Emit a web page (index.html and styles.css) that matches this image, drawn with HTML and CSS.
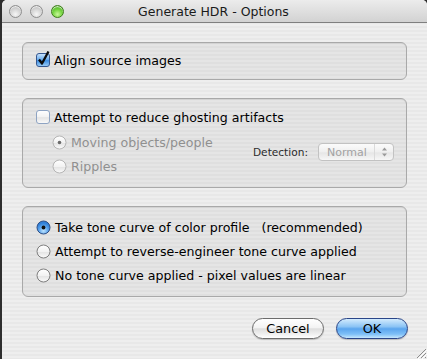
FILE: index.html
```html
<html>
<head>
    <title>Generate HDR - Options</title>
    <meta name="viewport" content="width=device-width, initial-scale=1" />
    <link rel="stylesheet" href="styles.css">
</head>
<body>
<div class="window">
    <div class="titlebar">
        <div class="lights">
            <span class="light"></span>
            <span class="light"></span>
            <span class="light green"></span>
        </div>
        <div class="title">Generate HDR - Options</div>
    </div>

    <div class="content">
        <div class="group group-align">
            <div class="option">
                <svg class="check" width="16" height="16" viewBox="0 0 16 16">
                    <defs>
                        <linearGradient id="blueCheck" x1="0" y1="0" x2="0" y2="1">
                            <stop offset="0" stop-color="#cfe6fb"/>
                            <stop offset="0.45" stop-color="#6fb0ef"/>
                            <stop offset="0.55" stop-color="#3d8ee3"/>
                            <stop offset="1" stop-color="#9fd0f8"/>
                        </linearGradient>
                    </defs>
                    <rect x="1.5" y="2.5" width="13" height="13" rx="2.5" fill="url(#blueCheck)" stroke="#36578f"/>
                    <path d="M4 8.5 L7 12.5 L13.5 0.5" fill="none" stroke="#0b0b0b" stroke-width="2.3" stroke-linejoin="round"/>
                </svg>
                <span>Align source images</span>
            </div>
        </div>

        <div class="group group-ghost">
            <div class="option">
                <svg class="check" width="16" height="16" viewBox="0 0 16 16">
                    <defs>
                        <linearGradient id="whiteBox" x1="0" y1="0" x2="0" y2="1">
                            <stop offset="0" stop-color="#ffffff"/>
                            <stop offset="0.5" stop-color="#f2f2f2"/>
                            <stop offset="0.55" stop-color="#e4e4e4"/>
                            <stop offset="1" stop-color="#fbfbfb"/>
                        </linearGradient>
                    </defs>
                    <rect x="1.5" y="2.5" width="13" height="13" rx="2.5" fill="url(#whiteBox)" stroke="#8ea3c2"/>
                </svg>
                <span>Attempt to reduce ghosting artifacts</span>
            </div>
            <div class="ghost-body">
                <div class="sub-options">
                    <div class="option disabled">
                        <svg class="radio" width="15" height="15" viewBox="0 0 15 15">
                            <circle cx="7.5" cy="7.5" r="6.5" fill="url(#whiteBox)" stroke="#b4b4b4"/>
                            <circle cx="7.5" cy="7.5" r="1.8" fill="#6a6a6a"/>
                        </svg>
                        <span>Moving objects/people</span>
                    </div>
                    <div class="option disabled">
                        <svg class="radio" width="15" height="15" viewBox="0 0 15 15">
                            <circle cx="7.5" cy="7.5" r="6.5" fill="url(#whiteBox)" stroke="#b4b4b4"/>
                        </svg>
                        <span>Ripples</span>
                    </div>
                </div>
                <div class="detection">
                    <span class="detection-label">Detection:</span>
                    <div class="popup">
                        <span class="popup-value">Normal</span>
                        <span class="popup-arrows">
                            <svg width="7" height="10" viewBox="0 0 7 10">
                                <path d="M3.5 0.5 L6 3.5 L1 3.5 Z" fill="#9a9a9a"/>
                                <path d="M3.5 9.5 L6 6.5 L1 6.5 Z" fill="#9a9a9a"/>
                            </svg>
                        </span>
                    </div>
                </div>
            </div>
        </div>

        <div class="group group-tone">
            <div class="option">
                <svg class="radio" width="15" height="15" viewBox="0 0 15 15">
                    <defs>
                        <radialGradient id="blueRadio" cx="0.5" cy="0.75" r="0.6">
                            <stop offset="0" stop-color="#bfe3fd"/>
                            <stop offset="0.6" stop-color="#5aa3ec"/>
                            <stop offset="1" stop-color="#2f7fd8"/>
                        </radialGradient>
                    </defs>
                    <circle cx="7.5" cy="7.5" r="6.5" fill="url(#blueRadio)" stroke="#2e4f86"/>
                    <circle cx="7.5" cy="7.5" r="1.9" fill="#111"/>
                </svg>
                <span>Take tone curve of color profile &nbsp;&nbsp;(recommended)</span>
            </div>
            <div class="option">
                <svg class="radio" width="15" height="15" viewBox="0 0 15 15">
                    <circle cx="7.5" cy="7.5" r="6.5" fill="url(#whiteBox)" stroke="#7d7d7d"/>
                </svg>
                <span>Attempt to reverse-engineer tone curve applied</span>
            </div>
            <div class="option">
                <svg class="radio" width="15" height="15" viewBox="0 0 15 15">
                    <circle cx="7.5" cy="7.5" r="6.5" fill="url(#whiteBox)" stroke="#7d7d7d"/>
                </svg>
                <span>No tone curve applied - pixel values are linear</span>
            </div>
        </div>

        <div class="buttons">
            <div class="button">Cancel</div>
            <div class="button default">OK</div>
        </div>
    </div>

    <svg class="grip" width="12" height="12" viewBox="0 0 12 12">
        <path d="M11 2 L2 11 M11 6 L6 11 M11 10 L10 11" stroke="#8c8c8c" stroke-width="1"/>
        <path d="M12 3 L3 12 M12 7 L7 12" stroke="#ffffff" stroke-width="1"/>
    </svg>
</div>
</body>
</html>
```

FILE: styles.css
```css
body {
    margin: 0;
    background: #2e2e2e;
    font-family: "DejaVu Sans", "Liberation Sans", sans-serif;
    font-size: 12.6px;
    color: #000;
}

.window {
    position: relative;
    margin-left: 2px;
    height: 359px;
    border-radius: 5px 5px 0 0;
    overflow: hidden;
    background: repeating-linear-gradient(#eeeeee 0 2px, #e8e8e8 2px 4px);
}

.titlebar {
    position: relative;
    height: 22px;
    border-bottom: 1px solid #7f7f7f;
    background: linear-gradient(#ececec, #d2d2d2);
    display: flex;
    align-items: center;
    justify-content: center;
}

.lights {
    position: absolute;
    left: 7px;
    top: 5px;
    display: flex;
    gap: 8px;
}

.light {
    width: 13px;
    height: 13px;
    border-radius: 50%;
    box-sizing: border-box;
    border: 1px solid #8e8e8e;
    background: radial-gradient(circle at 50% 75%, #f6f6f6 0, #d2d2d2 55%, #a9a9a9 100%);
    box-shadow: inset 0 1px 1px rgba(255,255,255,0.8);
}

.light.green {
    border-color: #3d7d1a;
    background: radial-gradient(circle at 50% 75%, #c9f79a 0, #6fd23a 50%, #3c9a16 100%);
}

.title {
    font-size: 12.5px;
    color: #1a1a1a;
    margin-left: -2px;
}

.content {
    padding: 19px 20px 0 20px;
}

.group {
    border: 1px solid #a9a9a9;
    border-radius: 6px;
    background: rgba(0,0,0,0.035);
    box-shadow: inset 0 1px 1px rgba(0,0,0,0.06);
    padding: 0 13px;
}

.group-align {
    padding-top: 5px;
    padding-bottom: 7px;
}

.group-ghost {
    margin-top: 18px;
    padding-top: 6px;
    padding-bottom: 9px;
}

.group-tone {
    margin-top: 18px;
    padding-top: 8px;
    padding-bottom: 9px;
}

.option {
    height: 24px;
    display: flex;
    align-items: center;
    white-space: pre;
}

.check {
    margin-left: -1px;
    margin-right: 3px;
    margin-top: -2px;
}

.radio {
    margin-right: 4px;
}

.disabled {
    color: #909090;
}

.ghost-body {
    margin-top: 1px;
    display: flex;
    justify-content: space-between;
    align-items: flex-start;
}

.sub-options {
    padding-left: 16px;
}

.detection {
    padding-top: 13px;
    margin-right: -1px;
    display: flex;
    align-items: center;
    gap: 10px;
}

.detection-label {
    font-size: 10.6px;
    color: #2a2a2a;
}

.popup {
    width: 76px;
    height: 18px;
    box-sizing: border-box;
    border: 1px solid #c2c2c2;
    border-radius: 4px;
    background: linear-gradient(#fbfbfb, #efefef 50%, #e6e6e6 55%, #f7f7f7);
    display: flex;
    align-items: center;
    font-size: 11px;
    color: #a2a2a2;
}

.popup-value {
    flex: 1;
    padding-left: 8px;
}

.popup-arrows {
    width: 18px;
    height: 100%;
    border-left: 1px solid #dadada;
    display: flex;
    align-items: center;
    justify-content: center;
}

.buttons {
    margin-top: 21px;
    margin-right: -1px;
    display: flex;
    justify-content: flex-end;
    gap: 12px;
}

.button {
    width: 72px;
    height: 21px;
    box-sizing: border-box;
    border: 1px solid #6c6c6c;
    border-radius: 11px;
    background: linear-gradient(#ffffff, #f3f3f3 45%, #dedede 52%, #f4f4f4 85%, #ffffff);
    box-shadow: 0 1px 1px rgba(0,0,0,0.2);
    display: flex;
    align-items: center;
    justify-content: center;
    font-size: 12.8px;
}

.button.default {
    border-color: #2a4588;
    background: linear-gradient(#d3ebfd, #8cc4f5 40%, #5ba5ee 52%, #7fc0f7 80%, #c6e7fd);
}

.grip {
    position: absolute;
    right: 0;
    bottom: 0;
}
```
